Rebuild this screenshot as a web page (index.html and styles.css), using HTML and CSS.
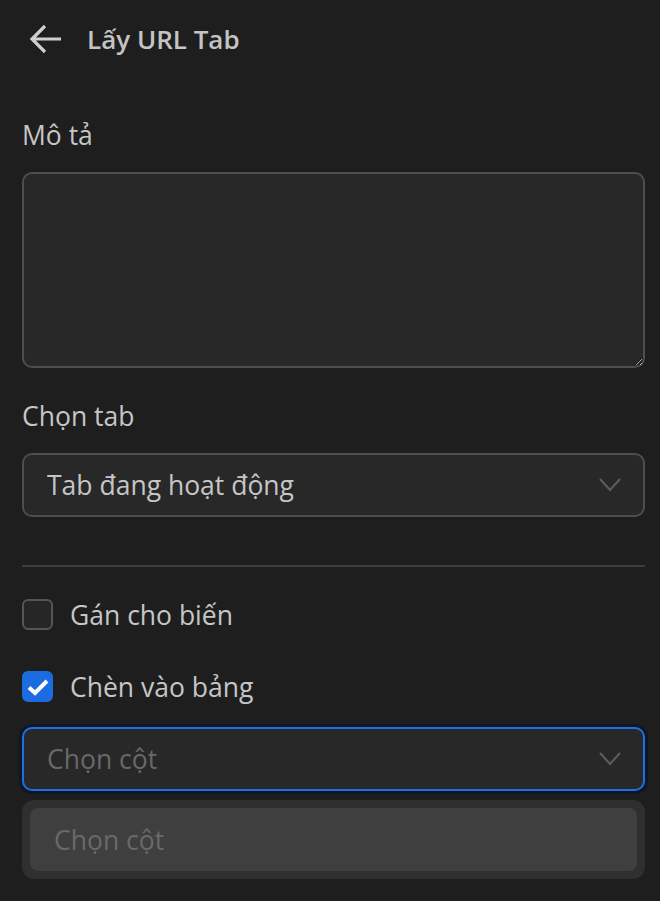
FILE: index.html
```html
<!DOCTYPE html>
<html lang="vi">
<head>
    <meta charset="utf-8">
    <link rel="stylesheet" href="styles.css">
</head>
<body>
    <div class="panel">
        <div class="header">
            <svg class="back" width="34" height="32" viewBox="0 0 34 32">
                <path d="M32 16 H4 M16 3 L3 16 L16 29" fill="none" stroke="#cfcfcf" stroke-width="3.2"/>
            </svg>
            <h1>Lấy URL Tab</h1>
        </div>

        <label class="field-label" for="desc">Mô tả</label>
        <textarea id="desc" class="textarea"></textarea>

        <label class="field-label second">Chọn tab</label>
        <div class="select">
            <span>Tab đang hoạt động</span>
            <svg class="chevron" width="22" height="14" viewBox="0 0 22 14">
                <path d="M1 1 L11 12 L21 1" fill="none" stroke="#5e5e5e" stroke-width="2"/>
            </svg>
        </div>

        <div class="divider"></div>

        <div class="check-row">
            <span class="checkbox"></span>
            <span>Gán cho biến</span>
        </div>
        <div class="check-row second">
            <span class="checkbox checked">
                <svg width="22" height="18" viewBox="0 0 22 18">
                    <path d="M2 9.5 L8 15 L20 3" fill="none" stroke="#fff" stroke-width="4"/>
                </svg>
            </span>
            <span>Chèn vào bảng</span>
        </div>

        <div class="select focused">
            <span class="placeholder">Chọn cột</span>
            <svg class="chevron" width="22" height="14" viewBox="0 0 22 14">
                <path d="M1 1 L11 12 L21 1" fill="none" stroke="#5e5e5e" stroke-width="2"/>
            </svg>
        </div>
        <div class="dropdown">
            <div class="option">Chọn cột</div>
        </div>
    </div>
</body>
</html>
```

FILE: styles.css
```css
html, body {
    margin: 0;
    background-color: #1e1e1e;
}
body {
    font-family: "Open Sans", "Noto Sans", sans-serif;
    color: #c6c6c6;
}
.panel {
    padding: 0 15px 24px 22px;
}
.header {
    height: 78px;
    display: flex;
    align-items: center;
    padding-left: 7px;
}
.back {
    display: block;
}
h1 {
    margin: 0 0 0 24px;
    font-size: 26px;
    font-weight: 600;
    color: #c4c4c4;
}
.field-label {
    display: block;
    margin-top: 39px;
    font-size: 26.5px;
    line-height: 36px;
}
.field-label.second {
    margin-top: 30px;
}
.textarea {
    display: block;
    box-sizing: border-box;
    width: 100%;
    height: 196px;
    margin-top: 19px;
    background-color: #282828;
    border: 2px solid #4e4e4e;
    border-radius: 10px;
    color: #c6c6c6;
    color-scheme: dark;
    resize: vertical;
}
.select {
    box-sizing: border-box;
    height: 64px;
    margin-top: 19px;
    padding: 0 22px 0 23px;
    display: flex;
    align-items: center;
    justify-content: space-between;
    background-color: #282828;
    border: 2px solid #4e4e4e;
    border-radius: 10px;
    font-size: 26.5px;
}
.select.focused {
    margin-top: 25px;
    border-color: #1f6fe0;
    box-shadow: 0 0 0 3px #0e1726;
}
.placeholder {
    color: #686868;
}
.divider {
    height: 2px;
    margin-top: 48px;
    background-color: #3e3e3e;
}
.check-row {
    display: flex;
    align-items: center;
    gap: 17px;
    margin-top: 32px;
    font-size: 26.5px;
    height: 31px;
}
.check-row.second {
    margin-top: 41px;
}
.checkbox {
    box-sizing: border-box;
    width: 31px;
    height: 31px;
    border: 2px solid #555;
    border-radius: 6px;
    background-color: #262626;
    display: flex;
    align-items: center;
    justify-content: center;
}
.checkbox.checked {
    background-color: #1b6ce0;
    border-color: #1b6ce0;
}
.dropdown {
    margin-top: 9px;
    padding: 8px;
    background-color: #2f2f2f;
    border-radius: 12px;
}
.option {
    height: 63px;
    display: flex;
    align-items: center;
    padding-left: 24px;
    background-color: #3f3f3f;
    border-radius: 8px;
    font-size: 26.5px;
    color: #696969;
}
```
